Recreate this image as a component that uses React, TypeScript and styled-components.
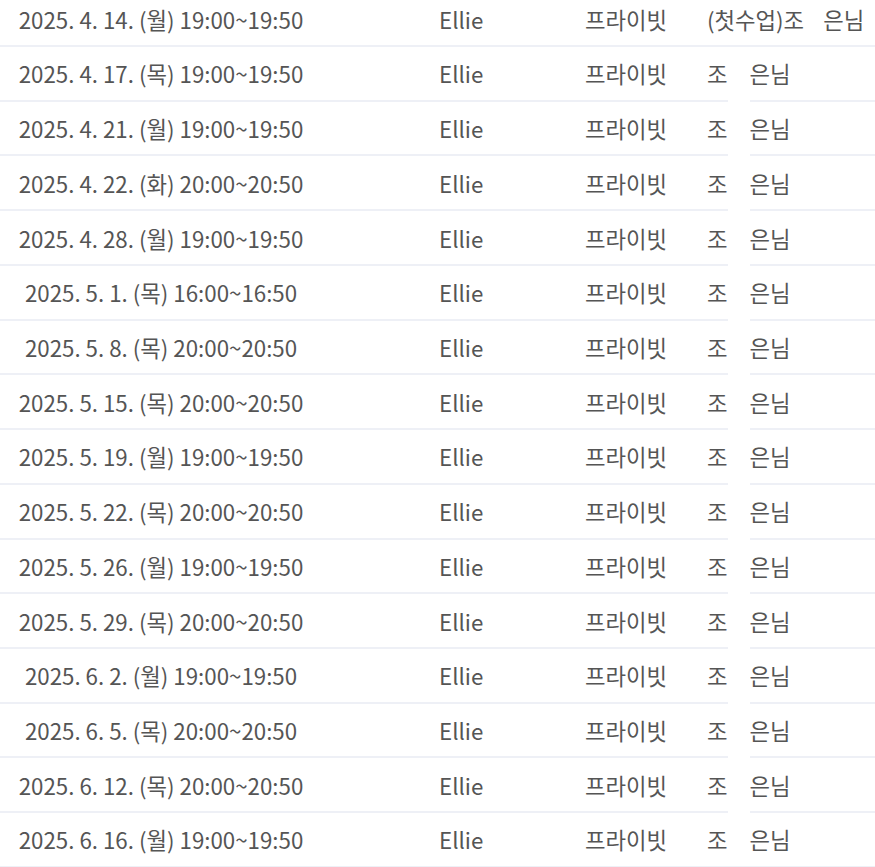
import React from "react";
import styled, { createGlobalStyle } from "styled-components";

const Global = createGlobalStyle`
  html, body { margin: 0; padding: 0; background: #fff; overflow: hidden; }
  body { font-family: "Noto Sans CJK KR", "Noto Sans", sans-serif; }
`;

const Table = styled.div`
  position: relative;
  width: 875px;
  margin-top: -7.7px;
`;

const Row = styled.div`
  display: grid;
  grid-template-columns: 322px 263px 122px 1fr;
  align-items: center;
  height: 52.73px;
  border-bottom: 2px solid #eef0f6;
  font-size: 22.3px;
  color: #555;
  white-space: nowrap;
`;

const DateCell = styled.div`
  text-align: center;
`;

const TeacherCell = styled.div`
  padding-left: 117px;
`;

const TypeCell = styled.div``;

const NameCell = styled.div`
  display: flex;
  align-items: center;
`;

const Masked = styled.span<{ $w: number }>`
  display: inline-block;
  width: ${(p) => p.$w}px;
`;

const MaskStrip = styled.div`
  position: absolute;
  left: 728px;
  width: 22px;
  top: 57px;
  height: 766px;
  background: #fff;
`;

const rows = [
  "2025. 4. 14. (월) 19:00~19:50",
  "2025. 4. 17. (목) 19:00~19:50",
  "2025. 4. 21. (월) 19:00~19:50",
  "2025. 4. 22. (화) 20:00~20:50",
  "2025. 4. 28. (월) 19:00~19:50",
  "2025. 5. 1. (목) 16:00~16:50",
  "2025. 5. 8. (목) 20:00~20:50",
  "2025. 5. 15. (목) 20:00~20:50",
  "2025. 5. 19. (월) 19:00~19:50",
  "2025. 5. 22. (목) 20:00~20:50",
  "2025. 5. 26. (월) 19:00~19:50",
  "2025. 5. 29. (목) 20:00~20:50",
  "2025. 6. 2. (월) 19:00~19:50",
  "2025. 6. 5. (목) 20:00~20:50",
  "2025. 6. 12. (목) 20:00~20:50",
  "2025. 6. 16. (월) 19:00~19:50",
];

export default function App() {
  return (
    <>
      <Global />
      <Table>
        {rows.map((d, i) => (
          <Row key={d}>
            <DateCell>{d}</DateCell>
            <TeacherCell>Ellie</TeacherCell>
            <TypeCell>프라이빗</TypeCell>
            <NameCell>
              {i === 0 ? "(첫수업)조" : "조"}
              <Masked $w={i === 0 ? 19 : 22} />
              은님
            </NameCell>
          </Row>
        ))}
        <MaskStrip />
      </Table>
    </>
  );
}
